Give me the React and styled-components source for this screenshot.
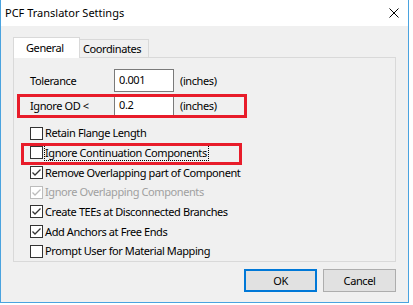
import React from "react";
import styled, { createGlobalStyle, css } from "styled-components";

const GlobalStyle = createGlobalStyle`
  html, body { margin: 0; padding: 0; background: #ffffff; }
  body {
    font-family: "Noto Sans", "Open Sans", "Liberation Sans", sans-serif;
    font-size: 11px;
    letter-spacing: -0.4px;
    color: #000000;
  }
  * { box-sizing: border-box; }
`;

const Window = styled.div`
  width: 409px;
  height: 303px;
  border: 1px solid #4aa3df;
  border-top: none;
  display: flex;
  flex-direction: column;
  background: #f0f0f0;
`;

const TitleBar = styled.div`
  height: 26px;
  flex: none;
  background: #ffffff;
  display: flex;
  align-items: center;
  justify-content: space-between;
  padding: 0 9px 0 4px;
`;

const Title = styled.span`
  font-size: 11px;
  letter-spacing: 0;
  line-height: 16px;
`;

const CloseIcon = styled.svg`
  width: 10px;
  height: 10px;
  display: block;
`;

const Body = styled.div`
  flex: 1;
  display: flex;
  flex-direction: column;
  padding: 11px 12px 0 12px;
`;

const TabRow = styled.div`
  display: flex;
  align-items: flex-end;
  height: 20px;
`;

const Tab = styled.div`
  position: relative;
  display: flex;
  align-items: center;
  justify-content: flex-start;
  border: 1px solid #d9d9d9;
  border-bottom: none;
  line-height: 16px;
  width: ${(p) => p.$width}px;
  ${(p) =>
    p.$active
      ? css`
          height: 21px;
          margin-bottom: -1px;
          background: #ffffff;
          z-index: 1;
          padding: 0 0 1px 12px;
        `
      : css`
          height: 18px;
          background: #f0f0f0;
          margin-left: -1px;
          padding: 1px 0 0 3px;
        `}
`;

const Panel = styled.div`
  height: 205px;
  border: 1px solid #d9d9d9;
  background: #f0f0f0;
  padding: 11px 0 0 16px;
  display: flex;
  flex-direction: column;
`;

const FieldRow = styled.div`
  position: relative;
  display: flex;
  align-items: center;
  height: 23px;
  margin-bottom: ${(p) => p.$gap || 0}px;
`;

const Highlight = styled.div`
  position: absolute;
  border: 3px solid #e81c2a;
  pointer-events: none;
  left: ${(p) => p.$l}px;
  top: ${(p) => p.$t}px;
  width: ${(p) => p.$w}px;
  height: ${(p) => p.$h}px;
`;

const FieldLabel = styled.span`
  width: 84px;
  line-height: 16px;
`;

const TextInput = styled.div`
  width: 60px;
  height: 23px;
  border: 1px solid #7a7a7a;
  background: #ffffff;
  padding: 2px 0 0 4px;
  line-height: 16px;
`;

const Unit = styled.span`
  margin-left: 6px;
  line-height: 16px;
`;

const CheckList = styled.div`
  margin-top: 6.5px;
  display: flex;
  flex-direction: column;
`;

const CheckRow = styled.div`
  position: relative;
  display: flex;
  align-items: center;
  height: 19.67px;
  color: ${(p) => (p.$disabled ? "#a0a0a0" : "#000000")};
`;

const Box = styled.span`
  width: 13px;
  height: 13px;
  flex: none;
  border: 1px solid ${(p) => (p.$disabled ? "#bcbcbc" : "#333333")};
  background: #ffffff;
  display: flex;
  align-items: center;
  justify-content: center;
  margin-right: 1px;
`;

const CheckLabel = styled.span`
  line-height: 14px;
  padding: 0 1px 0 0;
  border: 1px solid transparent;
  ${(p) =>
    p.$focused &&
    css`
      border: 1px dotted #000000;
    `}
`;

const ButtonRow = styled.div`
  display: flex;
  justify-content: flex-end;
  gap: 6px;
  margin-top: 7px;
`;

const Button = styled.div`
  width: 73px;
  height: 23px;
  background: #e1e1e1;
  display: flex;
  align-items: center;
  justify-content: center;
  line-height: 16px;
  border: ${(p) => (p.$default ? "2px solid #0078d7" : "1px solid #adadad")};
`;

function Tick({ color }) {
  return (
    <svg width="11" height="11" viewBox="0 0 11 11">
      <path d="M1.5 5.5 L4 8 L9.5 2.5" fill="none" stroke={color} strokeWidth="1.3" />
    </svg>
  );
}

function Check({ checked, disabled, focused, children, hl }) {
  const tickColor = disabled ? "#bcbcbc" : "#333333";
  return (
    <CheckRow $disabled={disabled}>
      <Box $disabled={disabled}>{checked && <Tick color={tickColor} />}</Box>
      <CheckLabel $focused={focused}>{children}</CheckLabel>
      {hl && <Highlight $l={-9} $t={0} $w={221} $h={22} />}
    </CheckRow>
  );
}

const options = [
  { label: "Retain Flange Length" },
  { label: "Ignore Continuation Components", focused: true, hl: true },
  { label: "Remove Overlapping part of Component", checked: true },
  { label: "Ignore Overlapping Components", checked: true, disabled: true },
  { label: "Create TEEs at Disconnected Branches", checked: true },
  { label: "Add Anchors at Free Ends", checked: true },
  { label: "Prompt User for Material Mapping" },
];

export default function App() {
  return (
    <>
      <GlobalStyle />
      <Window>
        <TitleBar>
          <Title>PCF Translator Settings</Title>
          <CloseIcon viewBox="0 0 10 10">
            <path d="M0.5 0.5 L9.5 9.5 M9.5 0.5 L0.5 9.5" stroke="#000" strokeWidth="1" fill="none" />
          </CloseIcon>
        </TitleBar>
        <Body>
          <TabRow>
            <Tab $active $width={67}>General</Tab>
            <Tab $width={70}>Coordinates</Tab>
          </TabRow>
          <Panel>
            <FieldRow $gap={2}>
              <FieldLabel>Tolerance</FieldLabel>
              <TextInput>0.001</TextInput>
              <Unit>(inches)</Unit>
            </FieldRow>
            <FieldRow>
              <FieldLabel>Ignore OD &lt;</FieldLabel>
              <TextInput>0.2</TextInput>
              <Unit>(inches)</Unit>
              <Highlight $l={-13} $t={0} $w={230} $h={24} />
            </FieldRow>
            <CheckList>
              {options.map((o) => (
                <Check key={o.label} {...o}>
                  {o.label}
                </Check>
              ))}
            </CheckList>
          </Panel>
          <ButtonRow>
            <Button $default>OK</Button>
            <Button>Cancel</Button>
          </ButtonRow>
        </Body>
      </Window>
    </>
  );
}
